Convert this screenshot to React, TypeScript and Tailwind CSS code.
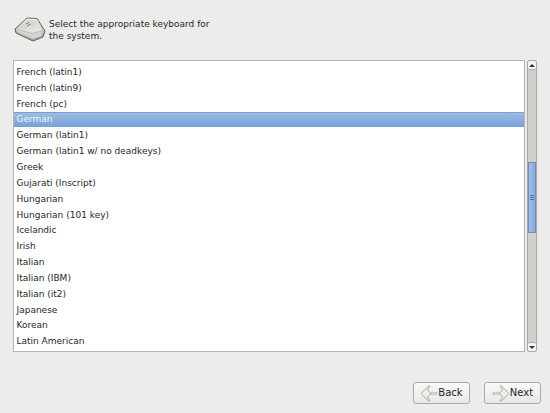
const layouts = [
  "French (latin1)",
  "French (latin9)",
  "French (pc)",
  "German",
  "German (latin1)",
  "German (latin1 w/ no deadkeys)",
  "Greek",
  "Gujarati (Inscript)",
  "Hungarian",
  "Hungarian (101 key)",
  "Icelandic",
  "Irish",
  "Italian",
  "Italian (IBM)",
  "Italian (it2)",
  "Japanese",
  "Korean",
  "Latin American",
];

function KeyIcon() {
  return (
    <svg width="32" height="25" viewBox="0 0 32 25" className="-mt-px shrink-0">
      <defs>
        <linearGradient id="keyFront" x1="0" y1="0" x2="0" y2="1">
          <stop offset="0" stopColor="#f2f2f0" />
          <stop offset="1" stopColor="#9e9e9b" />
        </linearGradient>
        <linearGradient id="keyTop" x1="0" y1="0" x2="1" y2="1">
          <stop offset="0" stopColor="#c9c9c6" />
          <stop offset="1" stopColor="#ecece9" />
        </linearGradient>
      </defs>
      <path d="M1 12 L13 1 L23 1.5 L31 14 L29 20 L19 24 L2 16 Z" fill="url(#keyFront)" stroke="#63635f" strokeWidth="1" strokeLinejoin="round" />
      <path d="M4 12 L14 3 L22 3.5 L28 13 L18 16 Z" fill="url(#keyTop)" />
      <path d="M4 13 L18 17 L28 14 L27 19 L19 22 L4 15 Z" fill="#dcdcd9" opacity="0.8" />
      <path d="M12 7 L15 5.5 M13 9 L17 7" stroke="#85857f" strokeWidth="1" />
    </svg>
  );
}

function ArrowIcon({ flip }: { flip?: boolean }) {
  return (
    <svg width="18" height="17" viewBox="0 0 18 17" className={flip ? "-scale-x-100" : ""}>
      <path d="M1 8.5 L8.5 1 L10 1 L7.5 5 L10 7.5 L10 9.5 L7.5 12 L10 16 L8.5 16 Z" fill="#ededea" stroke="#a8a8a4" strokeWidth="1" strokeLinejoin="round" />
      <circle cx="12.5" cy="8.5" r="1.4" fill="#ededea" stroke="#a8a8a4" strokeWidth="0.8" />
      <circle cx="16" cy="8.5" r="1.2" fill="#ededea" stroke="#a8a8a4" strokeWidth="0.8" />
    </svg>
  );
}

function NavButton({ label, flip }: { label: string; flip?: boolean }) {
  return (
    <button className="flex h-[22px] w-[57px] items-center justify-center rounded-[3px] border border-[#a9a9a5] bg-gradient-to-b from-[#f9f9f8] to-[#e9e8e6] text-[10px] text-[#1f2426]">
      {flip ? <ArrowIcon flip /> : <ArrowIcon />}
      <span>{label}</span>
    </button>
  );
}

export default function App() {
  return (
    <div className="flex h-[413px] w-[550px] flex-col overflow-hidden bg-[#edeceb] pl-[13px] pr-[9px] font-['DejaVu_Sans',sans-serif] text-[9px] leading-[12px] text-[#24282a]">
      <div className="flex h-[60px] items-start gap-[3px] pl-px pt-[18px]">
        <KeyIcon />
        <p className="w-[170px]">Select the appropriate keyboard for the system.</p>
      </div>

      <div className="flex h-[292px] gap-[2px] pr-[4px]">
        <div className="min-w-0 flex-1 border border-[#b4b4b0] bg-white pt-[3px]">
          {layouts.map((name) => (
            <div
              key={name}
              className={
                "flex h-[15.85px] items-center pl-[2.5px] " +
                (name === "German"
                  ? "border-y border-[#7a9fd0] bg-gradient-to-b from-[#9cbce4] to-[#7ca3d8] text-[#eef3fa]"
                  : "")
              }
            >
              {name}
            </div>
          ))}
        </div>

        <div className="flex w-[10px] flex-col rounded-[2px] border border-[#a9a9a5] bg-[#d0cfcc]">
          <div className="flex h-[9px] items-center justify-center rounded-[2px] border-b border-[#a9a9a5] bg-[#f4f4f2]">
            <div className="h-0 w-0 border-x-[3px] border-b-[3px] border-x-transparent border-b-[#2e3436]" />
          </div>
          <div className="h-[92px]" />
          <div className="flex h-[71px] flex-col items-center justify-center gap-px border border-[#6f8fba] bg-gradient-to-r from-[#a3c1e8] to-[#86abde]">
            <div className="h-px w-[4px] bg-[#4f6f9c]" />
            <div className="h-px w-[4px] bg-[#4f6f9c]" />
            <div className="h-px w-[4px] bg-[#4f6f9c]" />
          </div>
          <div className="flex-1" />
          <div className="flex h-[9px] items-center justify-center rounded-[2px] border-t border-[#a9a9a5] bg-[#f4f4f2]">
            <div className="h-0 w-0 border-x-[3px] border-t-[3px] border-x-transparent border-t-[#2e3436]" />
          </div>
        </div>
      </div>

      <div className="flex justify-end gap-[14px] pt-[30px]">
        <NavButton label="Back" />
        <NavButton label="Next" flip />
      </div>
    </div>
  );
}
